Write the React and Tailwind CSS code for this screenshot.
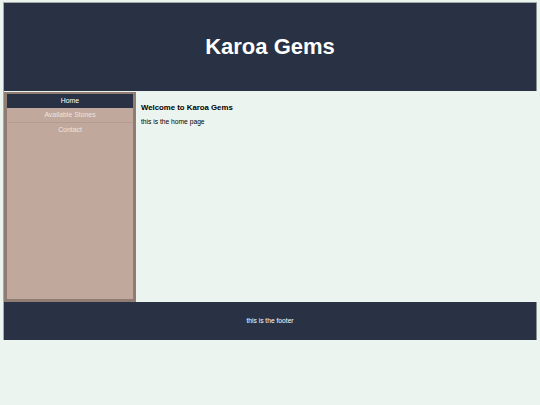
export default function App() {
  return (
    <div className="min-h-[405px] w-[540px] bg-[#ebf4ee] pt-[2px] pl-[3px]" style={{ fontFamily: '"Liberation Sans", Arial, sans-serif' }}>
      <div className="w-[534px] border-l border-t border-[#a3aaa8] flex flex-col">
        <header className="h-[88px] bg-[#283244] border-r border-[#8a9090] flex items-center justify-center">
          <h1 className="text-[22px] font-bold text-white leading-none">Karoa Gems</h1>
        </header>
        <div className="flex h-[210px] mt-px">
          <nav className="w-[132px] bg-[#c0a89d] border-[3px] border-[#8f7c73] border-t-2 flex flex-col text-[6.9px] text-center">
            <div className="h-[14px] bg-[#283244] text-white flex items-center justify-center">Home</div>
            <div className="h-[15px] text-[#eee4df] flex items-center justify-center border-b border-[#b49c91]">Available Stones</div>
            <div className="h-[14px] text-[#eee4df] flex items-center justify-center">Contact</div>
          </nav>
          <main className="flex-1 px-[5px] pt-[12px]">
            <h3 className="text-[7.8px] font-bold text-black leading-none">Welcome to Karoa Gems</h3>
            <p className="text-[6.7px] text-black leading-none mt-[7px]">this is the home page</p>
          </main>
        </div>
        <footer className="h-[38px] bg-[#283244] border-r border-[#8a9090] flex items-center justify-center">
          <p className="text-[6.7px] text-white">this is the footer</p>
        </footer>
      </div>
    </div>
  );
}
